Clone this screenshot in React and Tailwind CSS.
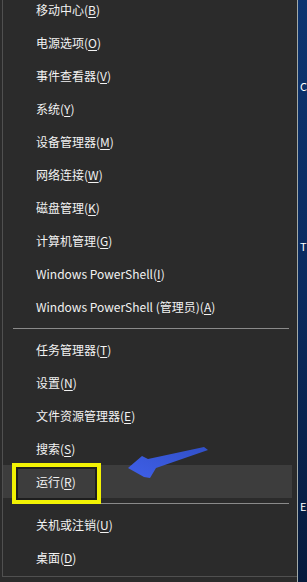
import React from 'react'

const groups = [
  [
    ['移动中心', 'B'],
    ['电源选项', 'O'],
    ['事件查看器', 'V'],
    ['系统', 'Y'],
    ['设备管理器', 'M'],
    ['网络连接', 'W'],
    ['磁盘管理', 'K'],
    ['计算机管理', 'G'],
    ['Windows PowerShell', 'I'],
    ['Windows PowerShell (管理员)', 'A'],
  ],
  [
    ['任务管理器', 'T'],
    ['设置', 'N'],
    ['文件资源管理器', 'E'],
    ['搜索', 'S'],
    ['运行', 'R'],
  ],
  [
    ['关机或注销', 'U'],
    ['桌面', 'D'],
  ],
]

function Item({ label, hotkey }) {
  const active = hotkey === 'R'
  return (
    <div className={'relative flex h-[33px] items-center pl-[33px] ' + (active ? 'mr-[5px] bg-[#3d3d3d]' : '')}>
      {active && (
        <div className="absolute left-[9px] top-[-2px] h-[41px] w-[89px] border-[4px] border-[#f2f204]">
          <div className="h-full w-full border-[2px] border-[#1e1e1e]" />
        </div>
      )}
      <span className="relative text-[12px] leading-none text-[#f2f2f2]">
        {label}(<span className="underline underline-offset-2">{hotkey}</span>)
      </span>
    </div>
  )
}

function Arrow() {
  return (
    <svg className="absolute left-[124px] top-[444px]" width="90" height="40" viewBox="0 0 90 40">
      <defs>
        <linearGradient id="ag" x1="0" y1="1" x2="1" y2="0">
          <stop offset="0" stopColor="#3f5fe8" />
          <stop offset="1" stopColor="#3150c8" />
        </linearGradient>
      </defs>
      <polygon
        points="4,24 18,12 24,15 80,3 84,6 32,24 26,34 20,33"
        fill="url(#ag)"
      />
    </svg>
  )
}

export default function App() {
  return (
    <div className="flex h-[582px] w-[307px] overflow-hidden bg-[#0b2a5c]" style={{ fontFamily: '"Noto Sans CJK SC", "Noto Sans", sans-serif' }}>
      <div className="relative flex h-full w-[298px] flex-col border-r border-[#a3aaa8] bg-[#2b2b2b]">
        <div className="ml-[2px] flex h-[577px] flex-col overflow-hidden border-b border-l border-[#505050]">
          <div className="-mt-[7px] flex flex-col">
            {groups.map((g, gi) => (
              <div key={gi} className="flex flex-col">
                {gi > 0 && (
                  <div className="flex h-[10px] items-center pl-[10px] pr-[8px]">
                    <div className="h-px w-full bg-[#8a8a8a]" />
                  </div>
                )}
                {g.map(([l, h]) => (
                  <Item key={h} label={l} hotkey={h} />
                ))}
              </div>
            ))}
          </div>
        </div>
        <Arrow />
      </div>
      <div className="relative flex-1 bg-gradient-to-b from-[#0d3470] via-[#0a2a5e] to-[#061a3c]">
        <span className="absolute left-[2px] top-[78px] text-[11px] text-white">C</span>
        <span className="absolute left-[2px] top-[238px] text-[11px] text-white">T</span>
        <span className="absolute left-[2px] top-[498px] text-[11px] text-white">E</span>
      </div>
    </div>
  )
}
